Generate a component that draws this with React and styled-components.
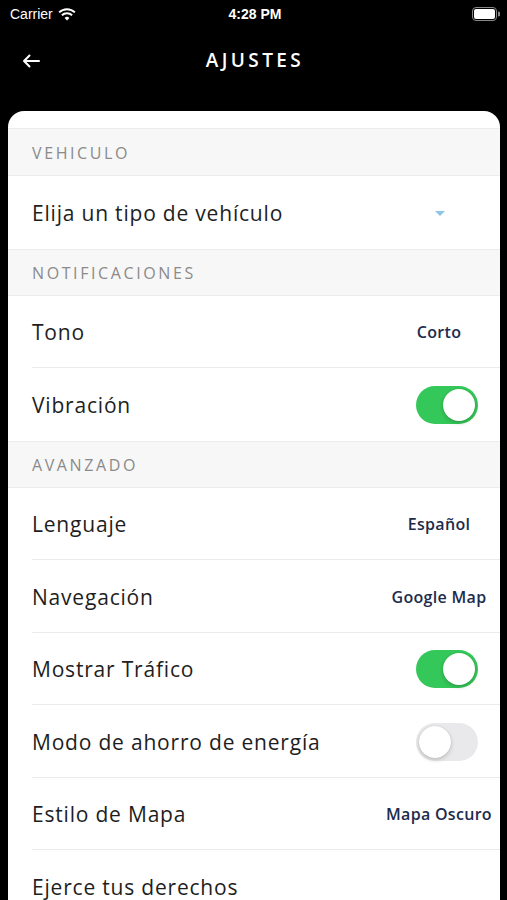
import styled, { createGlobalStyle } from "styled-components";

const GlobalStyle = createGlobalStyle`
  html, body {
    margin: 0;
    padding: 0;
    background: #000;
  }
  * { box-sizing: border-box; }
`;

const Screen = styled.div`
  width: 507px;
  height: 900px;
  overflow: hidden;
  background: #000;
  display: flex;
  flex-direction: column;
  font-family: "Open Sans", "Liberation Sans", sans-serif;
`;

const StatusBar = styled.div`
  height: 28px;
  display: grid;
  grid-template-columns: 1fr auto 1fr;
  align-items: center;
  padding: 0 7px 0 10px;
  color: #fff;
  font-family: "Liberation Sans", Arial, sans-serif;
  font-size: 14px;
`;

const Carrier = styled.div`
  display: flex;
  align-items: center;
  gap: 5px;
`;

const Time = styled.div`
  font-weight: 600;
`;

const Battery = styled.div`
  justify-self: end;
  display: flex;
  align-items: center;
`;

const NavBar = styled.div`
  height: 64px;
  display: grid;
  grid-template-columns: 60px 1fr 60px;
  align-items: center;
`;

const BackButton = styled.div`
  display: flex;
  align-items: center;
  padding-left: 22px;
  padding-top: 2px;
`;

const Title = styled.h1`
  margin: 0;
  text-align: center;
  color: #fff;
  font-size: 19px;
  font-weight: 600;
  letter-spacing: 3.4px;
  padding-left: 3px;
`;

const Card = styled.div`
  margin: 19px 7px 0 8px;
  flex: 1;
  background: #fff;
  border-radius: 16px 16px 0 0;
  padding-top: 17px;
  overflow: hidden;
`;

const SectionHeader = styled.div`
  height: ${(p) => p.$h || 47}px;
  background: #f7f7f7;
  border-top: 1px solid #ececec;
  border-bottom: 1px solid #ececec;
  display: flex;
  align-items: center;
  padding: 2px 0 0 24px;
  color: #8a8a8a;
  font-size: 16px;
  letter-spacing: 2.6px;
`;

const Row = styled.div`
  height: 72.5px;
  margin-left: 24px;
  padding-top: 2px;
  display: flex;
  align-items: center;
  justify-content: space-between;
  border-bottom: ${(p) => (p.$last ? "none" : "1px solid #ebebeb")};
`;

const Label = styled.span`
  font-size: 21px;
  letter-spacing: 0.8px;
  color: #1e1e1e;
  white-space: nowrap;
`;

const Trailing = styled.div`
  width: 120px;
  display: flex;
  justify-content: center;
  align-items: center;
  margin-right: ${(p) => (p.$toggle ? "-7px" : "1px")};
`;

const Value = styled.span`
  font-size: 16px;
  font-weight: 600;
  letter-spacing: 0.3px;
  color: #1d2c4c;
  white-space: nowrap;
`;

const Switch = styled.div`
  width: 62px;
  height: 38px;
  border-radius: 19px;
  background: ${(p) => (p.$on ? "#34c759" : "#e9e9eb")};
  padding: 3px;
  display: flex;
  justify-content: ${(p) => (p.$on ? "flex-end" : "flex-start")};
`;

const Knob = styled.div`
  width: 32px;
  height: 32px;
  border-radius: 50%;
  background: #fff;
  box-shadow: 0 2px 4px rgba(0, 0, 0, 0.18), 0 0 1px rgba(0, 0, 0, 0.2);
`;

const Caret = styled.div`
  width: 0;
  height: 0;
  border-left: 5px solid transparent;
  border-right: 5px solid transparent;
  border-top: 5px solid #8ec4e8;
  margin-left: 2px;
`;

function Wifi() {
  return (
    <svg width="18" height="13" viewBox="0 0 18 13">
      <path d="M9 12.5 L6.6 9.9 A3.4 3.4 0 0 1 11.4 9.9 Z" fill="#fff" />
      <path d="M3.9 7.3 A7.3 7.3 0 0 1 14.1 7.3" stroke="#fff" strokeWidth="2" fill="none" />
      <path d="M1.1 4.4 A11.3 11.3 0 0 1 16.9 4.4" stroke="#fff" strokeWidth="2" fill="none" />
    </svg>
  );
}

function BatteryIcon() {
  return (
    <svg width="28" height="14" viewBox="0 0 28 14">
      <rect x="0.5" y="0.5" width="24" height="13" rx="3.5" fill="none" stroke="#888" />
      <rect x="2" y="2" width="21" height="10" rx="2" fill="#fff" />
      <path d="M26 4.5 A2 2 0 0 1 26 9.5 Z" fill="#888" />
    </svg>
  );
}

function BackArrow() {
  return (
    <svg width="18" height="14" viewBox="0 0 18 14">
      <path d="M17 7 H2 M7.5 1.5 L2 7 L7.5 12.5" stroke="#fff" strokeWidth="2" fill="none" strokeLinecap="round" strokeLinejoin="round" />
    </svg>
  );
}

function Setting({ label, value, toggle, on, caret, last }) {
  return (
    <Row $last={last}>
      <Label>{label}</Label>
      {toggle ? (
        <Trailing $toggle>
          <Switch $on={on}>
            <Knob />
          </Switch>
        </Trailing>
      ) : (
        <Trailing>
          {caret ? <Caret /> : <Value>{value}</Value>}
        </Trailing>
      )}
    </Row>
  );
}

export default function App() {
  return (
    <>
      <GlobalStyle />
      <Screen>
        <StatusBar>
          <Carrier>
            Carrier <Wifi />
          </Carrier>
          <Time>4:28 PM</Time>
          <Battery>
            <BatteryIcon />
          </Battery>
        </StatusBar>
        <NavBar>
          <BackButton>
            <BackArrow />
          </BackButton>
          <Title>AJUSTES</Title>
          <div />
        </NavBar>
        <Card>
          <SectionHeader $h={48}>VEHICULO</SectionHeader>
          <Setting label="Elija un tipo de vehículo" caret last />
          <SectionHeader>NOTIFICACIONES</SectionHeader>
          <Setting label="Tono" value="Corto" />
          <Setting label="Vibración" toggle on last />
          <SectionHeader>AVANZADO</SectionHeader>
          <Setting label="Lenguaje" value="Español" />
          <Setting label="Navegación" value="Google Map" />
          <Setting label="Mostrar Tráfico" toggle on />
          <Setting label="Modo de ahorro de energía" toggle />
          <Setting label="Estilo de Mapa" value="Mapa Oscuro" />
          <Setting label="Ejerce tus derechos" />
        </Card>
      </Screen>
    </>
  );
}
